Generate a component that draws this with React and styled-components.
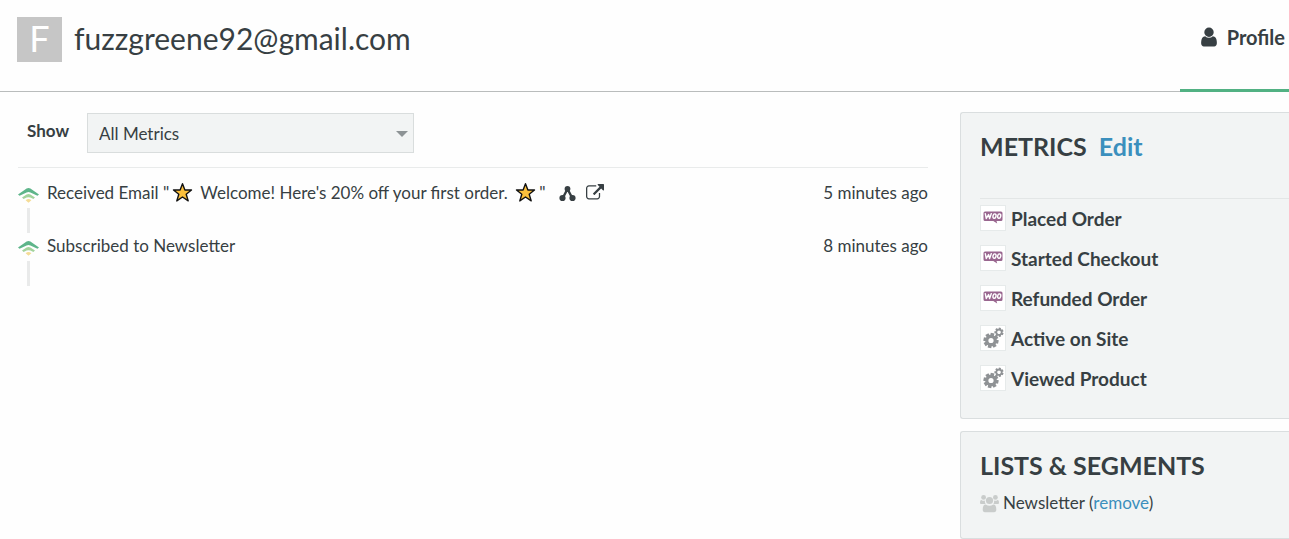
import styled, { createGlobalStyle } from "styled-components";

const events = [
  { id: 1, type: "email", subject: " Welcome! Here's 20% off your first order. ", time: "5 minutes ago" },
  { id: 2, type: "list", title: "Subscribed to Newsletter", time: "8 minutes ago" },
];

const metrics = [
  { name: "Placed Order", icon: "woo" },
  { name: "Started Checkout", icon: "woo" },
  { name: "Refunded Order", icon: "woo" },
  { name: "Active on Site", icon: "api" },
  { name: "Viewed Product", icon: "api" },
];

const UserIcon = () => (
  <svg width="22" height="22" viewBox="0 0 1792 1792" fill="currentColor" aria-hidden="true">
    <path d="M1536 1399q0 109-62.5 187t-150.5 78h-854q-88 0-150.5-78t-62.5-187q0-85 8.5-160.5t31.5-152 58.5-131 94-89 134.5-34.5q131 128 313 128t313-128q76 0 134.5 34.5t94 89 58.5 131 31.5 152 8.5 160.5zm-256-887q0 159-112.5 271.5t-271.5 112.5-271.5-112.5-112.5-271.5 112.5-271.5 271.5-112.5 271.5 112.5 112.5 271.5z" />
  </svg>
);

const ExternalIcon = () => (
  <svg width="18" height="18" viewBox="0 0 1792 1792" fill="currentColor">
    <path d="M1408 928v320q0 119-84.5 203.5t-203.5 84.5h-832q-119 0-203.5-84.5t-84.5-203.5v-832q0-119 84.5-203.5t203.5-84.5h704q14 0 23 9t9 23v64q0 14-9 23t-23 9h-704q-66 0-113 47t-47 113v832q0 66 47 113t113 47h832q66 0 113-47t47-113v-320q0-14 9-23t23-9h64q14 0 23 9t9 23zm384-864v512q0 26-19 45t-45 19-45-19l-176-176-652 652q-10 10-23 10t-23-10l-114-114q-10-10-10-23t10-23l652-652-176-176q-19-19-19-45t19-45 45-19h512q26 0 45 19t19 45z" />
  </svg>
);

const FlowIcon = () => (
  <svg width="17" height="17" viewBox="0 0 17 17" fill="currentColor">
    <path d="M8.5 4 3.5 13.5M8.5 4l5 9.5" stroke="currentColor" strokeWidth="2.4" />
    <circle cx="8.5" cy="3.8" r="2.9" />
    <circle cx="3.5" cy="13" r="3.1" />
    <circle cx="13.5" cy="13" r="3.1" />
  </svg>
);

const StarIcon = () => (
  <Star width="21" height="21" viewBox="0 0 21 21" role="img" aria-label="star">
    <path
      d="M10.5 1.7 12.9 8h6.6l-5.3 4.2 2 6.7-5.7-3.9-5.7 3.9 2-6.7L1.500 8h6.600z"
      fill="#fcc03c"
      stroke="#111"
      strokeWidth="1.4"
      strokeLinejoin="round"
    />
  </Star>
);

const SignalIcon = () => (
  <svg width="21" height="18" viewBox="0 0 22 18" fill="none" aria-hidden="true">
    <path d="M0 8.600 9 2.200Q11 .900 13 2.200l9 6.400-1.600 1.200L13 6.400Q11 5.400 9 6.400L1.600 9.800z" fill="#5eb58a" />
    <path d="M4.200 11.600 9 8.600Q11 7.500 13 8.600l4.800 3-1.700 1.500L13 11.700Q11 10.800 9 11.700l-3.100 1.400z" fill="#a3d39c" />
    <path d="M8 14.400Q11 12.200 14 14.400L11 17z" fill="#f5dc96" />
  </svg>
);

const WooIcon = () => (
  <svg width="20" height="14" viewBox="0 0 20 14" aria-hidden="true">
    <path d="M2 .5h16Q19.5.5 19.5 2v6.500Q19.500 10 18 10h-4.500l.7 2.600L10.300 10H2Q.5 10 .5 8.500V2Q.5.5 2 .5z" fill="#99668f" />
    <g fill="none" stroke="#fff" strokeWidth="1.4" strokeLinecap="round" strokeLinejoin="round">
      <path d="M2.300 2.700 3.300 7.500 5.600 3.600 6.600 7.500 8.300 2.600" />
      <ellipse cx="11.5" cy="5.1" rx="1.5" ry="2.2" transform="rotate(14 11.5 5.1)" />
      <ellipse cx="16.2" cy="5.1" rx="1.5" ry="2.2" transform="rotate(14 16.2 5.1)" />
    </g>
  </svg>
);

// one gear: a ring with short teeth around it
const Gear = ({ cx, cy, r, teeth, hole }) => (
  <g transform={`translate(${cx} ${cy})`}>
    {Array.from({ length: teeth }, (_, i) => (
      <rect
        key={i}
        x={-r * 0.24}
        y={-r}
        width={r * 0.48}
        height={r * 0.5}
        transform={`rotate(${(360 / teeth) * i + 12})`}
        fill="#8f9295"
      />
    ))}
    <circle r={(r * 0.76 + hole) / 2} fill="none" stroke="#8f9295" strokeWidth={r * 0.76 - hole} />
  </g>
);

const GearsIcon = () => (
  <svg width="22" height="22" viewBox="0 0 22 22" aria-hidden="true">
    <Gear cx={9} cy={13.5} r={7.6} teeth={8} hole={2.6} />
    <Gear cx={17} cy={5.2} r={4.6} teeth={7} hole={1.8} />
  </svg>
);

const GroupIcon = () => (
  <svg width="19" height="19" viewBox="0 0 19 19" fill="#c9cccb" aria-hidden="true">
    <circle cx="3.6" cy="3.4" r="2.4" />
    <circle cx="15.4" cy="3.4" r="2.4" />
    <path d="M0 9.300Q0 6 1.400 6q1.800 1.300 3.500.6-.3 2 .7 3.500H1.500Q0 10.200 0 9.300zM19 9.300Q19 6 17.600 6q-1.800 1.300-3.500.6.3 2-.7 3.500h4.100q1.500.1 1.500-.8z" />
    <circle cx="9.5" cy="6.5" r="3.6" />
    <path d="M2.700 15.600q0-5.200 3-5.200 3.800 2.600 7.600 0 3 0 3 5.200 0 2.700-2.300 2.700H5q-2.300 0-2.300-2.700z" />
  </svg>
);

const App = () => {
  return (
    <>
      <GlobalStyle />
      <Header>
        <Person>
          <Avatar>F</Avatar>
          <h1>fuzzgreene92@gmail.com</h1>
        </Person>
        <Tab href="#profile">
          <UserIcon />
          Profile
        </Tab>
      </Header>

      <Content>
        <Timeline>
          <Filter>
            <label htmlFor="metric">Show</label>
            <SelectBox>
              <select id="metric" defaultValue="all">
                <option value="all">All Metrics</option>
                {metrics.map((m) => (
                  <option key={m.name}>{m.name}</option>
                ))}
              </select>
            </SelectBox>
          </Filter>

          <EventList>
            {events.map((e) => (
              <Event key={e.id}>
                <Marker>
                  <SignalIcon />
                </Marker>
                <EventBody>
                  {e.type === "email" ? (
                    <>
                      <span>
                        Received Email "<StarIcon />
                        {e.subject}
                        <StarIcon />"
                      </span>
                      <Actions>
                        <IconButton aria-label="View flow">
                          <FlowIcon />
                        </IconButton>
                        <IconButton aria-label="Open email">
                          <ExternalIcon />
                        </IconButton>
                      </Actions>
                    </>
                  ) : (
                    <span>{e.title}</span>
                  )}
                </EventBody>
                <time>{e.time}</time>
              </Event>
            ))}
          </EventList>
        </Timeline>

        <Sidebar>
          <Panel>
            <PanelTitle>
              METRICS <a href="#edit">Edit</a>
            </PanelTitle>
            <MetricList>
              {metrics.map((m) => (
                <Metric key={m.name}>
                  <MetricIcon>{m.icon === "woo" ? <WooIcon /> : <GearsIcon />}</MetricIcon>
                  {m.name}
                </Metric>
              ))}
            </MetricList>
          </Panel>

          <Panel>
            <PanelTitle>LISTS &amp; SEGMENTS</PanelTitle>
            <Segment>
              <GroupIcon />
              <span>
                Newsletter (<a href="#remove">remove</a>)
              </span>
            </Segment>
          </Panel>
        </Sidebar>
      </Content>
    </>
  );
};

const GlobalStyle = createGlobalStyle`
  * {
    box-sizing: border-box;
  }

  body {
    margin: 0;
    background: #fefefe;
    color: #373f43;
    font-family: Lato, "Open Sans", sans-serif;
    font-size: 17px;
    line-height: 24px;
  }

  a {
    color: #3b8fbd;
    text-decoration: none;
  }

  svg {
    flex-shrink: 0;
  }
`;

const Header = styled.header`
  display: flex;
  justify-content: space-between;
  height: 92px;
  border-bottom: 1px solid #b9bcbc;
`;

const Person = styled.div`
  display: flex;
  align-items: center;
  gap: 12px;
  padding: 0 17px 13px;

  h1 {
    margin: 0;
    padding-bottom: 2px;
    font-size: 30px;
    line-height: 36px;
    font-weight: 400;
  }
`;

const Avatar = styled.div`
  display: flex;
  align-items: center;
  justify-content: center;
  width: 45px;
  height: 45px;
  padding-bottom: 2px;
  background: #c6c6c6;
  color: #fff;
  font-size: 36px;
`;

const Tab = styled.a`
  display: flex;
  align-items: center;
  gap: 7px;
  margin-bottom: -1px;
  padding: 0 4px 16px 18px;
  border-bottom: 3px solid #52b183;
  color: #373f43;
  font-size: 20px;
  font-weight: 700;
`;

const Content = styled.main`
  display: flex;
  gap: 32px;
  padding: 20px 0 0 18px;
`;

const Timeline = styled.section`
  flex: 1;
  min-width: 0;
`;

const Filter = styled.div`
  display: flex;
  gap: 18px;
  padding: 1px 0 14px 9px;
  border-bottom: 1px solid #e9ebeb;

  label {
    line-height: 36px;
    font-weight: 700;
  }
`;

const SelectBox = styled.div`
  position: relative;
  width: 327px;

  select {
    appearance: none;
    width: 100%;
    height: 40px;
    padding: 2px 32px 0 11px;
    border: 1px solid #d9dddd;
    border-radius: 0;
    background: #f2f4f4;
    color: inherit;
    font: inherit;
  }

  &::after {
    content: "";
    position: absolute;
    top: 18px;
    right: 6px;
    border: 6px solid transparent;
    border-top-color: #8d9395;
    border-bottom: 0;
    pointer-events: none;
  }
`;

const EventList = styled.ul`
  margin: 0;
  padding: 13px 0 0;
  list-style: none;
`;

const Event = styled.li`
  display: flex;
  gap: 8px;
  height: 53px;
`;

const Marker = styled.div`
  display: flex;
  flex-direction: column;
  align-items: center;
  gap: 4px;
  padding-top: 5px;

  &::after {
    content: "";
    width: 3px;
    height: 25px;
    background: #e9eaea;
  }
`;

const EventBody = styled.div`
  flex: 1;
  display: flex;
  align-items: flex-start;
  gap: 13px;
`;

const Star = styled.svg`
  margin: 0 3px;
  vertical-align: -4px;
`;

const Actions = styled.div`
  display: flex;
  align-items: center;
  gap: 10px;
  height: 24px;
`;

const IconButton = styled.button`
  padding: 0;
  border: 0;
  background: none;
  color: inherit;
  line-height: 0;
  cursor: pointer;
`;

const Sidebar = styled.aside`
  flex: 0 0 329px;
  display: flex;
  flex-direction: column;
  gap: 12px;
`;

const Panel = styled.section`
  padding: 18px 0 19px 19px;
  border: 1px solid #dadedf;
  border-right: 0;
  border-radius: 3px 0 0 3px;
  background: #f2f4f4;
`;

const PanelTitle = styled.h2`
  margin: 0;
  font-size: 25px;
  line-height: 30px;
  font-weight: 700;

  a {
    margin-left: 6px;
  }
`;

const MetricList = styled.ul`
  margin: 37px 0 0;
  padding: 0;
  border-top: 1px solid #e3e6e6;
  list-style: none;
`;

const Metric = styled.li`
  display: flex;
  align-items: center;
  gap: 5px;
  height: 40px;
  font-size: 19px;
  font-weight: 700;
`;

const MetricIcon = styled.span`
  display: flex;
  align-items: center;
  justify-content: center;
  width: 26px;
  height: 26px;
  margin-bottom: 2px;
  border: 1px solid #e6eaea;
  background: #fff;
`;

const Segment = styled.div`
  display: flex;
  align-items: center;
  gap: 4px;
  padding: 11px 0 4px;
`;

export default App;
